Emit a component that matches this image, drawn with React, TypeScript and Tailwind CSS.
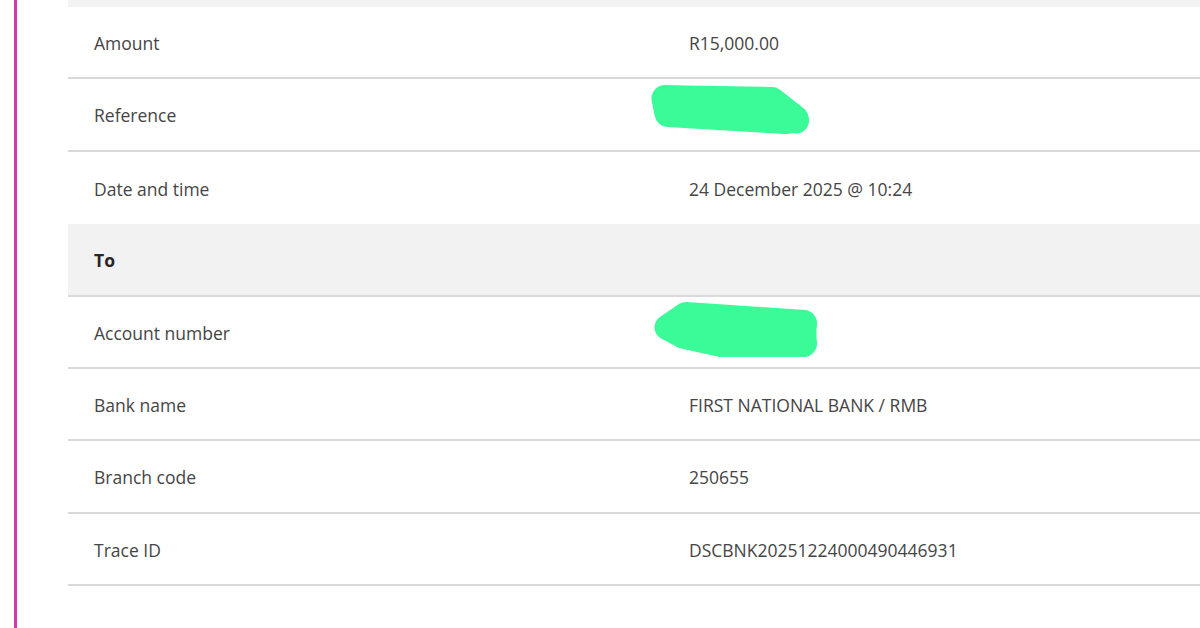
import React from 'react';

type Row = {
  label: string;
  value?: string;
  header?: boolean;
  redacted?: 'reference' | 'account';
};

const rows: Row[] = [
  { label: 'Amount', value: 'R15,000.00' },
  { label: 'Reference', redacted: 'reference' },
  { label: 'Date and time', value: '24 December 2025 @ 10:24' },
  { label: 'To', header: true },
  { label: 'Account number', redacted: 'account' },
  { label: 'Bank name', value: 'FIRST NATIONAL BANK / RMB' },
  { label: 'Branch code', value: '250655' },
  { label: 'Trace ID', value: 'DSCBNK20251224000490446931' },
];

const GREEN = '#3afb98';

// hand-drawn marker scribbles that hide the private values
const Scribble = ({ kind }: { kind: 'reference' | 'account' }) => {
  if (kind === 'reference') {
    return (
      <svg
        className="absolute left-[577px] top-0"
        width={180}
        height={70}
        viewBox="645 79.4 180 70"
      >
        <path
          d="M665 99 C700 100 750 100 772 101 L795 119 L786 121 L668 114 Z"
          fill={GREEN}
          stroke={GREEN}
          strokeWidth={27}
          strokeLinejoin="round"
        />
        <circle cx={796} cy={121} r={13} fill={GREEN} />
      </svg>
    );
  }
  return (
    <svg
      className="absolute left-[577px] top-0"
      width={180}
      height={72}
      viewBox="645 296.6 180 72"
    >
      <path
        d="M667 327 L686 314 L804 322 L804 344 L720 344 L684 336 Z"
        fill={GREEN}
        stroke={GREEN}
        strokeWidth={25}
        strokeLinejoin="round"
      />
      <circle cx={805} cy={323} r={12} fill={GREEN} />
      <circle cx={805} cy={343} r={12} fill={GREEN} />
    </svg>
  );
};

export default function App() {
  return (
    <div
      className="h-[628px] w-full overflow-hidden bg-white"
      style={{ fontFamily: '"Open Sans", "Noto Sans", sans-serif' }}
    >
      <div className="ml-[14px] flex h-full border-l-[3px] border-[#d63aa4] pl-[51px]">
        <div className="flex-1">
          <div className="h-[7px] bg-[#f2f2f2]" />
          {rows.map((row) => (
            <div
              key={row.label}
              className={
                row.header
                  ? 'relative grid h-[72.4px] grid-cols-[621px_1fr] items-center border-b-2 border-[#d9d9d9] bg-[#f2f2f2] pt-[1px]'
                  : row.label === 'Date and time'
                  ? 'relative grid h-[72.4px] grid-cols-[621px_1fr] items-center pt-[2px]'
                  : 'relative grid h-[72.4px] grid-cols-[621px_1fr] items-center border-b-2 border-[#d9d9d9] pt-[2px]'
              }
            >
              <div
                className={
                  row.header
                    ? 'pl-[26px] text-[17.5px] font-bold text-[#262626]'
                    : 'pl-[26px] text-[17.5px] text-[#454545]'
                }
              >
                {row.label}
              </div>
              <div className="text-[17.5px] text-[#454545]">{row.value}</div>
              {row.redacted && <Scribble kind={row.redacted} />}
            </div>
          ))}
        </div>
      </div>
    </div>
  );
}
